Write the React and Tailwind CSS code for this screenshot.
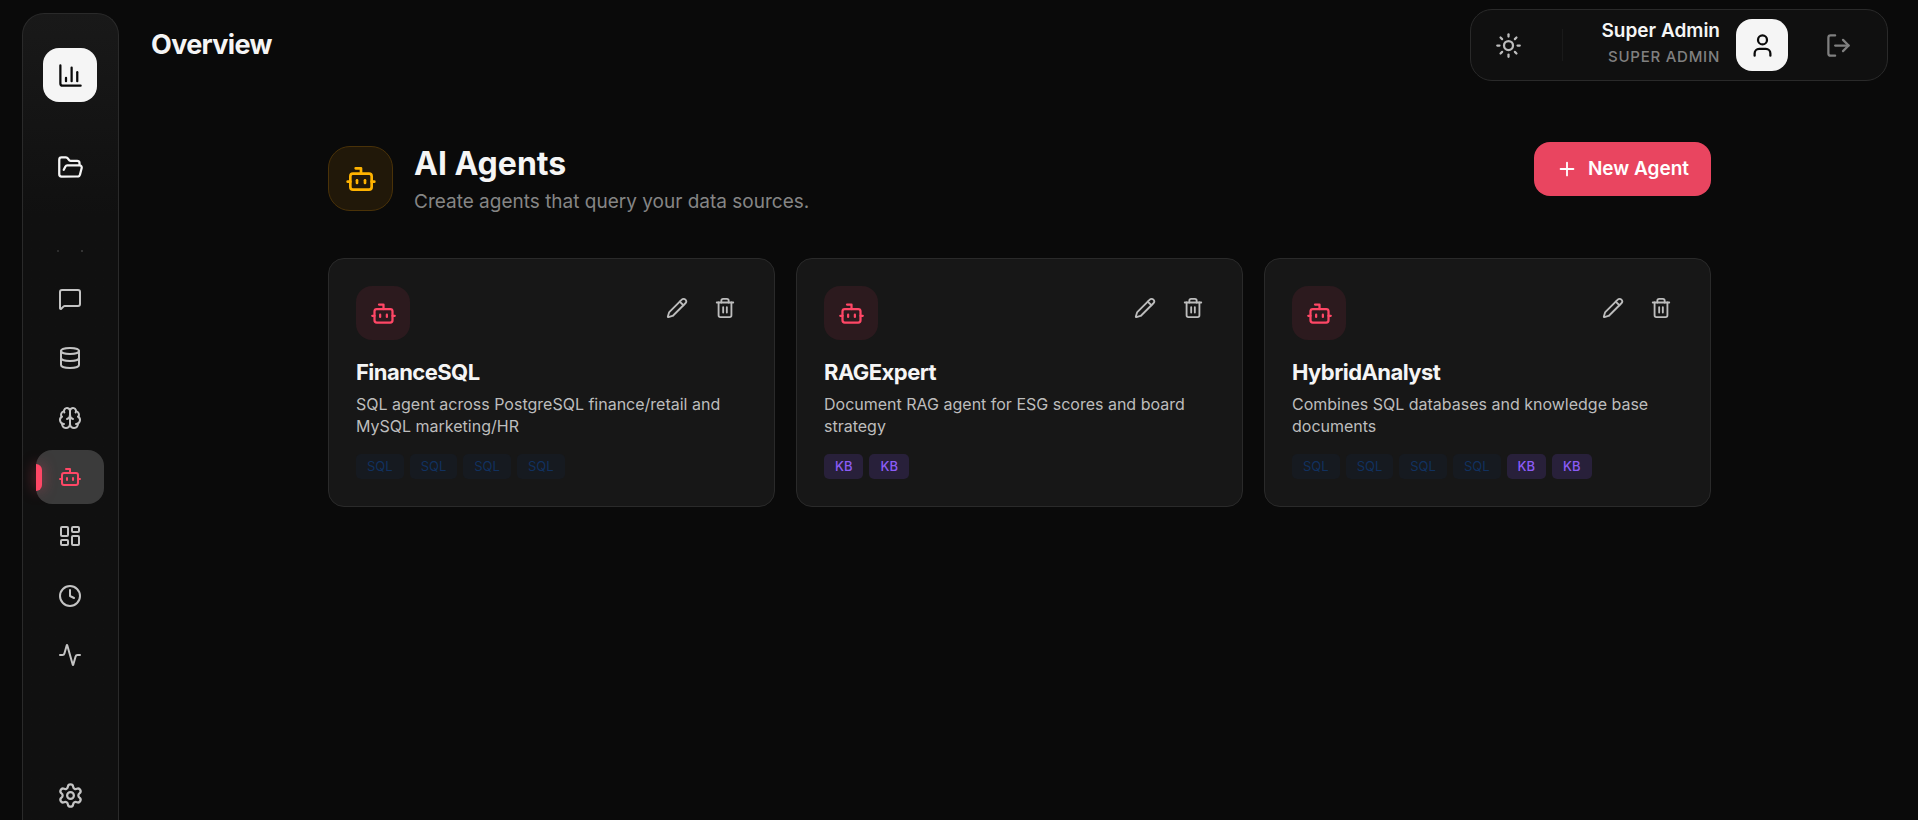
import { useState } from 'react'
import {
  Activity, Bot, Brain, ChartColumn, Clock, Database, FolderOpen, LayoutDashboard,
  LogOut, MessageSquare, Pencil, Plus, Settings, Sun, Trash2, User,
} from 'lucide-react'
import clsx from 'clsx'

const NAV = [
  { id: 'chat', label: 'Chat', icon: MessageSquare },
  { id: 'sources', label: 'Data sources', icon: Database },
  { id: 'knowledge', label: 'Knowledge', icon: Brain },
  { id: 'agents', label: 'Agents', icon: Bot },
  { id: 'dashboards', label: 'Dashboards', icon: LayoutDashboard },
  { id: 'schedules', label: 'Schedules', icon: Clock },
  { id: 'activity', label: 'Activity', icon: Activity },
]

const AGENTS = [
  { id: 1, name: 'FinanceSQL', description: 'SQL agent across PostgreSQL finance/retail and MySQL marketing/HR', tags: ['SQL', 'SQL', 'SQL', 'SQL'] },
  { id: 2, name: 'RAGExpert', description: 'Document RAG agent for ESG scores and board strategy', tags: ['KB', 'KB'] },
  { id: 3, name: 'HybridAnalyst', description: 'Combines SQL databases and knowledge base documents', tags: ['SQL', 'SQL', 'SQL', 'SQL', 'KB', 'KB'] },
]

function Sidebar({ active, onSelect }) {
  return (
    <aside className="ml-[22px] mt-[13px] flex w-[97px] shrink-0 flex-col items-center rounded-t-[22px] border border-b-0 border-[#2a2a2a] bg-linear-to-b from-[#191919] via-[#101010] via-25% to-[#101010] pr-px">
      <a href="#home" aria-label="Home" className="mt-[34px] flex size-[54px] items-center justify-center rounded-2xl bg-[#f5f5f5] text-[#0a0a0a]">
        <ChartColumn size={27} />
      </a>
      <button aria-label="Projects" className="mt-[38px] flex size-[54px] items-center justify-center text-[#f5f5f5]">
        <FolderOpen size={27} />
      </button>

      <div className="mt-14 flex w-[26px] justify-between">
        <span className="size-0.5 bg-[#2c2c2c]" />
        <span className="size-0.5 bg-[#333333]" />
      </div>

      <nav className="mt-5 flex h-[410px] flex-col justify-between">
        {NAV.map(({ id, label, icon: Icon }) => (
          <a key={id} href={`#${id}`} aria-label={label} onClick={() => onSelect(id)}
            className={clsx('relative flex h-[54px] w-[68px] items-center justify-center rounded-2xl',
              active === id ? 'bg-[#3b3b3b] text-[#ff4766]' : 'text-[#c4c4c4]')}>
            {active === id && (
              <span className="absolute left-0 top-3.5 h-[27px] w-1.5 rounded-r-md bg-[#ff4766] shadow-[0_0_14px_rgba(233,69,96,0.6)]" />
            )}
            <Icon size={24} />
          </a>
        ))}
      </nav>

      <button aria-label="Settings" className="-mb-0.5 mt-auto flex size-[54px] items-center justify-center text-[#c4c4c4]">
        <Settings size={27} />
      </button>
    </aside>
  )
}

function Header() {
  return (
    <header className="flex items-center justify-between px-[30px] pt-[9px]">
      <h1 className="text-[27px] font-bold tracking-tight text-[#f5f5f5]">Overview</h1>
      <div className="flex h-[72px] items-center rounded-[22px] border border-[#2a2a2a] bg-[#101010] pr-[22px]">
        <button aria-label="Toggle theme" className="ml-2.5 flex size-[54px] items-center justify-center text-[#bdbdbd]">
          <Sun size={27} />
        </button>
        <div className="ml-[27px] h-8 w-px bg-[#1a1a1a]" />
        <div className="ml-[38px] pb-0.5 text-right">
          <p className="text-[19px] font-semibold leading-6 text-[#f5f5f5]">Super Admin</p>
          <p className="mt-0.5 text-[15px] font-medium uppercase leading-6 tracking-wider text-[#808080]">Super Admin</p>
        </div>
        <div className="ml-4 flex size-[52px] items-center justify-center rounded-2xl bg-[#f5f5f5] text-[#0a0a0a]">
          <User size={27} />
        </div>
        <button aria-label="Log out" className="ml-[23px] flex size-[54px] items-center justify-center text-[#808080]">
          <LogOut size={27} />
        </button>
      </div>
    </header>
  )
}

function Tag({ children }) {
  return (
    <span className={clsx('rounded-[5px] px-[11px] text-[13px] leading-[25px]',
      children === 'KB' ? 'bg-[#28203a] font-medium text-[#8b5cf6]' : 'bg-[#161a20] text-[#11315f]')}>
      {children}
    </span>
  )
}

function AgentCard({ agent }) {
  return (
    <article className="rounded-2xl border border-[#2a2a2a] bg-[#171717] p-[27px]">
      <div className="flex items-start justify-between">
        <div className="flex size-[54px] items-center justify-center rounded-2xl bg-[#2c1a1e] text-[#ff4766]">
          <Bot size={27} />
        </div>
        <div className="flex gap-1 text-[#bdbdbd]">
          <button aria-label={`Edit ${agent.name}`} className="p-[11px]"><Pencil size={22} /></button>
          <button aria-label={`Delete ${agent.name}`} className="p-[11px]"><Trash2 size={22} /></button>
        </div>
      </div>
      <h3 className="mt-4 text-[22px] font-bold leading-8 tracking-tight text-[#f5f5f5]">{agent.name}</h3>
      <p className="mt-[5px] text-base leading-[22px] text-[#bdbdbd]">{agent.description}</p>
      <div className="mt-[17px] flex gap-1.5">
        {agent.tags.map((t, i) => <Tag key={i}>{t}</Tag>)}
      </div>
    </article>
  )
}

export default function App() {
  const [active, setActive] = useState('agents')

  return (
    <div className="flex min-h-screen bg-[#0a0a0a] font-['Inter',sans-serif]">
      <Sidebar active={active} onSelect={setActive} />
      <div className="ml-0.5 min-w-0 flex-1">
        <Header />
        <main className="mx-auto max-w-[1383px] pt-[61px]">
          <div className="flex items-start justify-between">
            <div className="flex items-start gap-[21px]">
              <div className="mt-1 flex size-[65px] items-center justify-center rounded-[22px] border border-[#4a3208] bg-[#211809] text-[#ffb300]">
                <Bot size={32} />
              </div>
              <div>
                <h2 className="text-[32px] font-bold leading-[44px] text-[#f5f5f5]">AI Agents</h2>
                <p className="mt-0.5 text-[19px] leading-7 text-[#858585]">Create agents that query your data sources.</p>
              </div>
            </div>
            <button className="flex h-[54px] items-center gap-2.5 rounded-2xl bg-[#e94560] px-[22px] text-[19px] font-semibold text-white">
              <Plus size={22} /> New Agent
            </button>
          </div>

          <div className="mt-[42px] grid grid-cols-3 gap-[21px]">
            {AGENTS.map(a => <AgentCard key={a.id} agent={a} />)}
          </div>
        </main>
      </div>
    </div>
  )
}
